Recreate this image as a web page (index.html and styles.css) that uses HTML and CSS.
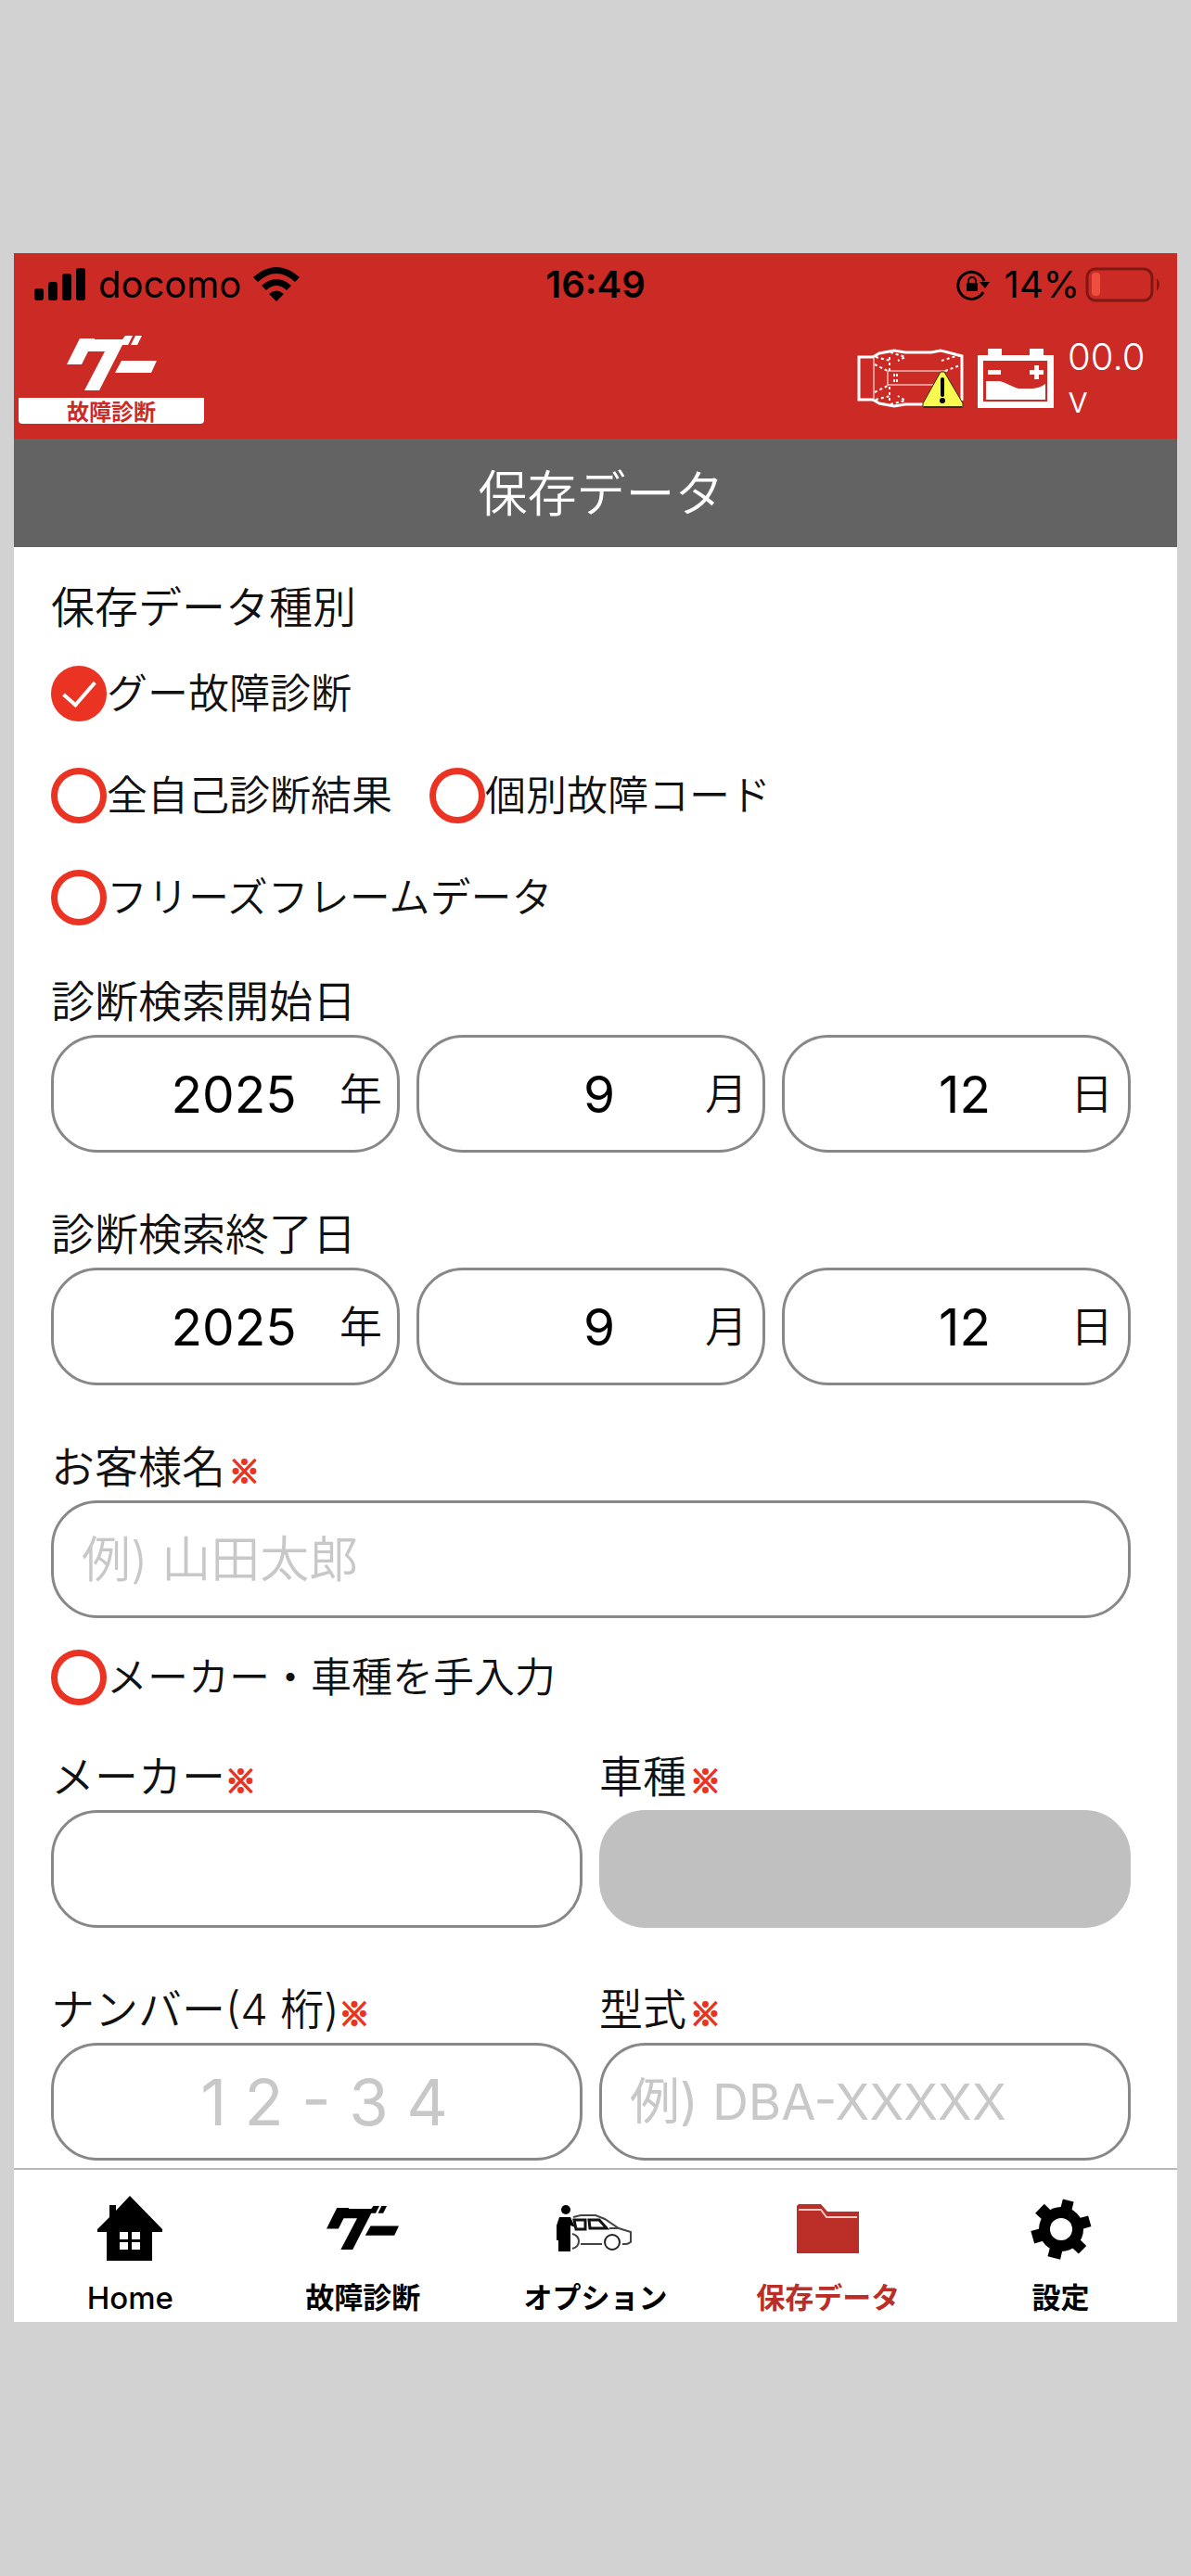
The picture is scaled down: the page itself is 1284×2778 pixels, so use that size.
FILE: index.html
```html
<!DOCTYPE html>
<html lang="ja">
<head>
    <meta charset="UTF-8">
    <meta name="viewport" content="width=device-width">
    <title>保存データ</title>
    <link rel="stylesheet" href="styles.css">
</head>
<body>
<svg class="defs" aria-hidden="true">
    <symbol id="goo" viewBox="0 0 97 59">
        <path d="M14 3H30V4H60L63 0H71L66 10H60L35 59H19L41 17H23L16 31H0Z"/>
        <path d="M74 0H81L76 10H69Z"/>
        <path d="M59 27H97L91 40H52Z"/>
    </symbol>
</svg>
<div class="phone">
    <div class="status">
        <div class="carrier">
            <svg width="56" height="36" viewBox="0 0 56 36">
                <rect x="0" y="22" width="10" height="13" rx="3"/>
                <rect x="15" y="15" width="10" height="20" rx="3"/>
                <rect x="30" y="6" width="10" height="29" rx="3"/>
                <rect x="45" y="0" width="10" height="35" rx="3"/>
            </svg>
            <span>docomo</span>
            <svg width="50" height="37" viewBox="0 0 50 37">
                <path d="M0 11Q25 -11 50 11L45 16Q25 -2 5 16Z"/>
                <path d="M9 20Q25 6 41 20L36 25Q25 15 14 25Z"/>
                <path d="M17 29Q25 22 33 29L25 37Z"/>
            </svg>
        </div>
        <div class="clock">16:49</div>
        <div class="power">
            <svg class="lock" width="36" height="34" viewBox="0 0 36 34">
                <path d="M30 13A14.5 14.5 0 1 0 29 25" fill="none" stroke="#000" stroke-width="3"/>
                <path d="M25 14H36L31 21Z"/>
                <rect x="11" y="15" width="12" height="9" rx="1"/>
                <path d="M13 16V13A4 4 0 0 1 21 13V16" fill="none" stroke="#000" stroke-width="2"/>
            </svg>
            <span>14%</span>
            <svg width="82" height="38" viewBox="0 0 82 38">
                <rect x="2" y="2" width="70" height="34" rx="9" fill="none" stroke="#7e1815" stroke-width="3"/>
                <rect x="7" y="6" width="9" height="25" rx="4" fill="#ee4f3c"/>
                <path d="M77 12Q83 19 77 26Z" fill="#7e1815"/>
            </svg>
        </div>
    </div>
    <header class="header">
        <a class="logo" href="#">
            <svg width="97" height="59"><use href="#goo"/></svg>
            <span>故障診断</span>
        </a>
        <div class="state">
            <svg width="115" height="65" viewBox="0 0 115 65" fill="none" stroke="#fff">
                <path d="M18 9H2V55H18" stroke-width="3"/>
                <path d="M17 9L24 5L40 2L52 4H80L90 2L98 4L113 8V56M17 55L24 59L40 62L52 60H75" stroke-width="3"/>
                <path d="M18 10V54M33 24H97M33 39H85M33 24V40" stroke-width="1"/>
                <path d="M19 17L33 24M19 47L33 40M35 9V24M35 41V56M20 9L36 13M20 55L36 51M36 4L52 9L44 13M36 60L52 56L44 51M40 27V37M43 27V37M95 24L111 18M91 13L110 7" stroke-width="2" stroke-dasharray="3 3"/>
                <path d="M90 25H94L114 59V63H71V59Z" fill="#f9fa50" stroke="#30300c" stroke-width="1"/>
                <path d="M72 63H113" stroke="#30300c" stroke-width="2"/>
                <path d="M92 33V50" stroke="#000" stroke-width="4" stroke-linecap="round"/>
                <circle cx="92" cy="56" r="3" fill="#000" stroke="none"/>
            </svg>
            <svg width="82" height="65" viewBox="0 0 82 65" fill="#fff">
                <path fill-rule="evenodd" d="M0 7H11V0H26V7H56V0H71V7H82V64H0ZM6 13V57H75V13Z"/>
                <path d="M9 35H24Q28 36 34 39T44 43H60Q68 42 73 38V55H9Z"/>
                <path d="M11 23H25V28H11ZM56 23H61V18H66V23H71V28H66V33H61V28H56Z"/>
            </svg>
            <div class="volt">00.0<br>v</div>
        </div>
    </header>
    <h1 class="title">保存データ</h1>
    <form class="content">
        <div class="kinds" role="group" aria-labelledby="kind">
            <div class="label" id="kind">保存データ種別</div>
            <div class="line">
                <label class="check"><input type="checkbox" checked>グー故障診断</label>
            </div>
            <div class="line">
                <label class="check"><input type="checkbox">全自己診断結果</label>
                <label class="check"><input type="checkbox">個別故障コード</label>
            </div>
            <div class="line">
                <label class="check"><input type="checkbox">フリーズフレームデータ</label>
            </div>
        </div>
        <div class="group" role="group" aria-labelledby="start">
            <div class="label" id="start">診断検索開始日</div>
            <div class="row">
                <label class="field date"><select><option>2025</option></select><span>年</span></label>
                <label class="field date"><select><option>9</option></select><span>月</span></label>
                <label class="field date"><select><option>12</option></select><span>日</span></label>
            </div>
        </div>
        <div class="group" role="group" aria-labelledby="end">
            <div class="label" id="end">診断検索終了日</div>
            <div class="row">
                <label class="field date"><select><option>2025</option></select><span>年</span></label>
                <label class="field date"><select><option>9</option></select><span>月</span></label>
                <label class="field date"><select><option>12</option></select><span>日</span></label>
            </div>
        </div>
        <div class="group">
            <label class="label" for="customer">お客様名<span class="must space">※</span></label>
            <input class="field" type="text" id="customer" placeholder="例) 山田太郎">
        </div>
        <div class="line manual">
            <label class="check"><input type="checkbox">メーカー・車種を手入力</label>
        </div>
        <div class="row">
            <div class="group">
                <label class="label" for="maker">メーカー<span class="must">※</span></label>
                <select class="field" id="maker"><option></option></select>
            </div>
            <div class="group">
                <label class="label" for="model">車種<span class="must space">※</span></label>
                <select class="field" id="model" disabled><option></option></select>
            </div>
        </div>
        <div class="row">
            <div class="group">
                <label class="label" for="number">ナンバー(4 桁)<span class="must">※</span></label>
                <input class="field code number" type="text" id="number" placeholder="1 2 - 3 4">
            </div>
            <div class="group">
                <label class="label" for="type">型式<span class="must space">※</span></label>
                <input class="field code" type="text" id="type" placeholder="例) DBA-XXXXX">
            </div>
        </div>
    </form>
    <nav class="tabs">
        <a href="#">
            <svg width="70" height="72" viewBox="0 0 70 72">
                <path d="M35 0L70 36V39H59V70H10V39H0V36L13 23V10H20V16Z"/>
                <path d="M24 39H33V47H24ZM37 39H46V47H37ZM24 50H33V58H24ZM37 50H46V58H37Z" fill="#fff"/>
            </svg>
            <span class="home">Home</span>
        </a>
        <a href="#">
            <svg width="78" height="72" viewBox="0 -13 97 89">
                <use href="#goo" width="97" height="59"/>
            </svg>
            <span>故障診断</span>
        </a>
        <a href="#">
            <svg width="84" height="72" viewBox="0 -10 84 72">
                <circle cx="10" cy="5" r="5"/>
                <path d="M3 13H15L20 24L15 22V50H2V38H0V22Z"/>
                <path d="M18 13L26 11H42L52 15L67 25L80 29V40L76 42M49 42H26M17 31Q24 33 24 39T17 47M57 25H67M71 42H76" fill="none" stroke="#444" stroke-width="2"/>
                <path d="M19 16H31V26H21ZM35 16H46L54 25H36Z" fill="none" stroke="#111" stroke-width="3"/>
                <circle cx="60" cy="40" r="8" fill="#fff" stroke="#222" stroke-width="2"/>
            </svg>
            <span>オプション</span>
        </a>
        <a class="active" href="#">
            <svg width="67" height="72" viewBox="0 -8 67 72">
                <path d="M0 3L2 1H26L33 9H67V54H0Z"/>
                <path d="M2 7H26L32 15H65" fill="none" stroke="#f1c9c7" stroke-width="2"/>
            </svg>
            <span>保存データ</span>
        </a>
        <a href="#">
            <svg width="66" height="72" viewBox="-33 -36 66 72">
                <g transform="rotate(14)">
                    <path id="teeth" d="M-6 -32H6L7 32H-7Z"/>
                    <use href="#teeth" transform="rotate(60)"/>
                    <use href="#teeth" transform="rotate(120)"/>
                </g>
                <circle r="24"/>
                <circle r="12" fill="#fff"/>
            </svg>
            <span>設定</span>
        </a>
    </nav>
</div>
</body>
</html>
```
FILE: styles.css
```css
*{
    box-sizing: border-box;
}
body{
    margin:0;
    padding:273px 15px;
    background: #d2d2d2;
    color: #111;
    font-family: Inter,"Noto Sans CJK JP",sans-serif;
    font-weight: 350;
}
a{
    color: inherit;
    text-decoration: none;
}
svg{
    display: block;
}
.defs{
    position: absolute;
    width:0;
    height:0;
}
.phone{
    background: #fff;
}
.status{
    display: grid;
    grid-template-columns: 1fr auto 1fr;
    align-items: center;
    height:67px;
    padding:0 17px;
    background: #cb2b24;
    color: #000;
    font-size: 40px;
    font-weight: 400;
}
.carrier,.power{
    display: flex;
    align-items: center;
    gap:13px;
}
.carrier{
    padding-left:5px;
}
.power{
    justify-content: flex-end;
    gap:6px;
}
.lock{
    margin-right:10px;
}
.clock{
    font-weight: 600;
}
.header{
    display: flex;
    justify-content: space-between;
    align-items: flex-start;
    height:133px;
    padding:22px 34px 0 5px;
    background: #cb2b24;
    color: #fff;
}
.logo{
    display: flex;
    flex-direction: column;
    align-items: center;
    gap:8px;
    width:200px;
    fill: #fff;
}
.logo span{
    width:100%;
    height:28px;
    border-radius: 0 0 4px 4px;
    background: #fff;
    color: #cb2b24;
    font-family: "Noto Sans CJK JP",sans-serif;
    font-size: 24px;
    font-weight: 700;
    line-height: 28px;
    text-align: center;
}
.state{
    display: flex;
    align-items: center;
    gap:15px;
}
.volt{
    width:84px;
    font-size: 40px;
    font-weight: 300;
    line-height: 46px;
}
.title{
    margin:0;
    height:117px;
    padding-left:12px;
    background: #636363;
    color: #fff;
    font-size: 53px;
    font-weight: 350;
    line-height: 121px;
    text-align: center;
}
.content{
    padding:29px 50px 8px 40px;
}
.label{
    display: block;
    height:72px;
    font-size: 47px;
    line-height: 72px;
    white-space: nowrap;
}
.kinds .label{
    margin-bottom:27px;
}
.line{
    display: flex;
    gap:40px;
    margin-bottom:50px;
}
.line:last-child{
    margin-bottom:46px;
}
.manual{
    margin:-18px 0 41px;
}
.check{
    display: flex;
    align-items: center;
    height:60px;
    font-size: 44px;
    line-height: 56px;
}
.check input{
    display: grid;
    place-items: center;
    appearance: none;
    width:60px;
    height:60px;
    margin:0;
    border: 7px solid #eb3323;
    border-radius: 50%;
}
.check input:checked{
    background: #eb3323;
}
.check input:checked:before{
    content: '';
    width:15px;
    height:30px;
    margin-bottom:8px;
    border: solid #fff;
    border-width: 0 4px 4px 0;
    transform: rotate(41deg);
}
.group{
    flex:1;
    min-width:0;
    margin-bottom:52px;
}
.row{
    display: flex;
    gap:18px;
}
.row:last-child .group{
    margin-bottom:0;
}
.field{
    display: block;
    appearance: none;
    width:100%;
    height:127px;
    margin:0;
    padding:0 14px 0 30px;
    border: 3px solid #888;
    border-radius: 50px;
    outline: 0;
    background: #fff;
    font: inherit;
    font-size: 53px;
}
.field::placeholder{
    color: #c8c8c8;
    opacity: 1;
}
.field:disabled{
    border-color: #c0c0c0;
    background: #c0c0c0;
    opacity: 1;
}
.code{
    font-size: 54px;
    font-weight: 400;
}
.number{
    font-size: 69px;
    text-align: center;
}
.date{
    display: flex;
    align-items: center;
    padding:0 16px 0 80px;
    font-size: 46px;
}
.date span{
    padding-bottom:7px;
    font-family: "Noto Sans CJK JP",sans-serif;
    line-height: 1;
}
.date select{
    flex:1;
    appearance: none;
    min-width:0;
    padding:0;
    border:0;
    background: none;
    color: #000;
    font: inherit;
    font-size: 55px;
    font-weight: 400;
    text-align: center;
    text-align-last: center;
}
.must{
    color: #eb3323;
    font-family: "Noto Sans CJK JP",sans-serif;
    font-size: 33px;
    font-weight: 700;
    line-height: 1;
    -webkit-text-stroke: 2px #eb3323;
}
.space{
    margin-left:4px;
}
.tabs{
    display: flex;
    border-top: 2px solid #b8b8b8;
    padding:28px 0 6px;
    color: #000;
    font-size: 31px;
    font-weight: 600;
    line-height: 40px;
}
.tabs a{
    flex:1;
    display: flex;
    flex-direction: column;
    align-items: center;
    gap:18px;
}
.tabs .home{
    font-size: 33px;
    font-weight: 500;
}
.tabs .active{
    color: #bb2d27;
    fill: #bb2d27;
}
```
